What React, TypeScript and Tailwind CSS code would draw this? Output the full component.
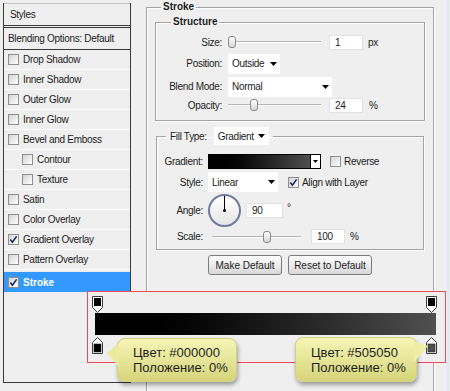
import React from 'react';

const styleItems = [
  { name: 'Drop Shadow', checked: false, indent: false },
  { name: 'Inner Shadow', checked: false, indent: false },
  { name: 'Outer Glow', checked: false, indent: false },
  { name: 'Inner Glow', checked: false, indent: false },
  { name: 'Bevel and Emboss', checked: false, indent: false },
  { name: 'Contour', checked: false, indent: true },
  { name: 'Texture', checked: false, indent: true },
  { name: 'Satin', checked: false, indent: false },
  { name: 'Color Overlay', checked: false, indent: false },
  { name: 'Gradient Overlay', checked: true, indent: false },
  { name: 'Pattern Overlay', checked: false, indent: false },
];

const Check = ({ checked = false }: { checked?: boolean }) => (
  <span className="w-[11px] h-[11px] shrink-0 border border-[#8e8f8f] bg-gradient-to-br from-[#d4d4d4] to-white flex items-center justify-center">
    {checked && (
      <svg width="9" height="9" viewBox="0 0 9 9">
        <path d="M1.3 4.6 L3.4 7.2 L7.6 1.4" stroke="#1b2560" strokeWidth="1.6" fill="none" />
      </svg>
    )}
  </span>
);

const Arrow = () => (
  <svg width="7" height="4" viewBox="0 0 7 4" className="shrink-0">
    <path d="M0 0 H7 L3.5 4 Z" fill="#000" />
  </svg>
);

const Select = ({ value, w }: { value: string; w: string }) => (
  <div className={`${w} h-[20px] bg-white flex items-center justify-between pl-[4px] pr-[3px]`}>
    <span>{value}</span>
    <Arrow />
  </div>
);

const Field = ({ value, w }: { value: string; w: string }) => (
  <div className={`${w} h-[15px] bg-white border border-[#e2e2e2] flex items-center pl-[5px]`}>{value}</div>
);

const Slider = ({ w, pos }: { w: string; pos: number }) => (
  <div className={`${w} relative h-[12px] flex items-center`}>
    <div className="w-full h-[2px] border-t border-[#b4b4b4] border-b border-b-white" />
    <div
      className="absolute top-0 w-[8px] h-[12px] rounded-[3px] border border-[#8a8a8a] bg-gradient-to-b from-white to-[#d6d6d6]"
      style={{ left: pos }}
    />
  </div>
);

const StopDown = () => (
  <svg width="11" height="17" viewBox="0 0 11 17">
    <path d="M0.5 0.5 H10.5 V11.5 L5.5 16.5 L0.5 11.5 Z" fill="#fff" stroke="#3a3a3a" />
    <rect x="2" y="2" width="7" height="8" fill="#000" />
  </svg>
);

const StopUp = ({ color }: { color: string }) => (
  <svg width="11" height="17" viewBox="0 0 11 17">
    <path d="M5.5 0.5 L10.5 5.5 V16.5 H0.5 V5.5 Z" fill="#fff" stroke="#3a3a3a" />
    <rect x="2" y="7" width="7" height="8" fill={color} stroke="#222" strokeWidth="0.6" />
  </svg>
);

const Tip = ({ color, left }: { color: string; left: boolean }) => (
  <div className="relative w-full h-full rounded-[8px] border border-[#d2d083] bg-gradient-to-b from-[#f6f5b6] to-[#d6d57a] shadow-[1px_3px_4px_rgba(0,0,0,0.35)] flex flex-col justify-center pl-[15px] text-[13px] leading-[15px] text-[#1e1e1e]">
    {left ? (
      <svg width="14" height="30" viewBox="0 0 14 30" className="absolute left-[-13px] top-[3px]">
        <polygon points="14,1 2,11 14,25" fill="#ecea9b" />
      </svg>
    ) : (
      <svg width="16" height="30" viewBox="0 0 16 30" className="absolute right-[-14px] top-[2px]">
        <polygon points="0,1 14,6 0,22" fill="#efeea6" />
      </svg>
    )}
    <span>Цвет: {color}</span>
    <span>Положение: 0%</span>
  </div>
);

export default function App() {
  return (
    <div className="relative w-[450px] h-[391px] overflow-hidden bg-[#efefef] flex items-start font-['Liberation_Sans',Arial,sans-serif] text-[10px] text-[#1c1c1c]">
      {/* styles list */}
      <div className="mt-[3px] ml-[3px] w-[128px] h-[380px] shrink-0 border-x border-b border-[#3a3a3a] flex flex-col tracking-[-0.3px]">
        <div className="h-[22px] border-t border-[#c4c4c4] pl-[6px] flex items-center">Styles</div>
        <div className="h-[3px] border-y border-[#3a3a3a]" />
        <div className="h-[22px] pl-[4px] flex items-center border-b border-[#3a3a3a]">Blending Options: Default</div>
        {styleItems.map((it) => (
          <div
            key={it.name}
            className={`h-[20px] flex items-center gap-[4px] border-b border-[#fafafa] ${it.indent ? 'pl-[18px]' : 'pl-[4px]'}`}
          >
            <Check checked={it.checked} />
            <span>{it.name}</span>
          </div>
        ))}
        <div className="h-[20px] mt-[2px] flex items-center gap-[4px] pl-[4px] bg-[#3399ff] text-white font-bold tracking-normal">
          <Check checked />
          <span>Stroke</span>
        </div>
      </div>

      {/* stroke settings */}
      <fieldset className="ml-[15px] mt-[1px] w-[288px] h-[400px] shrink-0 border border-[#a3a3a3] shadow-[inset_1px_1px_0_#fff,1px_1px_0_#fff]">
        <legend className="ml-[14px] px-[2px] font-bold leading-[12px]">Stroke</legend>
        <div className="px-[8px] tracking-[-0.3px]">
          <fieldset className="mt-[3px] w-[270px] border border-[#a3a3a3] shadow-[inset_1px_1px_0_#fff,1px_1px_0_#fff]">
            <legend className="ml-[15px] px-[2px] font-bold leading-[12px] tracking-normal">Structure</legend>
            <div className="pt-[5px] pb-[7px] flex flex-col">
              <div className="h-[18px] flex items-center">
                <span className="w-[66px] text-right">Size:</span>
                <div className="ml-[6px]"><Slider w="w-[93px]" pos={0} /></div>
                <div className="ml-[8px]"><Field value="1" w="w-[34px]" /></div>
                <span className="ml-[5px]">px</span>
              </div>
              <div className="h-[21px] mt-[2px] flex items-center">
                <span className="w-[66px] text-right">Position:</span>
                <div className="ml-[6px]"><Select value="Outside" w="w-[52px]" /></div>
              </div>
              <div className="h-[21px] mt-[2px] flex items-center">
                <span className="w-[66px] text-right">Blend Mode:</span>
                <div className="ml-[6px]"><Select value="Normal" w="w-[104px]" /></div>
              </div>
              <div className="h-[16px] flex items-center">
                <span className="w-[66px] text-right">Opacity:</span>
                <div className="ml-[6px]"><Slider w="w-[93px]" pos={22} /></div>
                <div className="ml-[8px]"><Field value="24" w="w-[34px]" /></div>
                <span className="ml-[6px]">%</span>
              </div>
            </div>
          </fieldset>

          <fieldset className="mt-[6px] ml-[1px] w-[268px] border border-[#a3a3a3] shadow-[inset_1px_1px_0_#fff,1px_1px_0_#fff]">
            <legend className="ml-[9px] px-[4px] flex items-center gap-[7px]">
              <span>Fill Type:</span>
              <div className="w-[55px] h-[18px] bg-white flex items-center justify-between pl-[4px] pr-[4px]">
                <span>Gradient</span>
                <Arrow />
              </div>
            </legend>
            <div className="pt-[9px] pb-[5px] flex flex-col">
              <div className="h-[15px] flex items-center">
                <span className="w-[46px] text-right">Gradient:</span>
                <div className="ml-[5px] w-[113px] h-[15px] border border-black flex">
                  <div className="flex-1 bg-gradient-to-r from-black to-[#505050]" />
                  <div className="w-[10px] border-l border-black bg-white flex items-center justify-center">
                    <svg width="5" height="3" viewBox="0 0 5 3"><path d="M0 0 H5 L2.5 3 Z" fill="#000" /></svg>
                  </div>
                </div>
                <div className="ml-[9px]"><Check /></div>
                <span className="ml-[3px]">Reverse</span>
              </div>
              <div className="h-[20px] mt-[3px] flex items-center">
                <span className="w-[46px] text-right">Style:</span>
                <div className="ml-[5px]"><Select value="Linear" w="w-[70px]" /></div>
                <div className="ml-[10px]"><Check checked /></div>
                <span className="ml-[3px]">Align with Layer</span>
              </div>
              <div className="h-[33px] mt-[2px] flex items-center">
                <span className="w-[46px] text-right">Angle:</span>
                <div className="ml-[5px] w-[33px] h-[33px] rounded-full border-2 border-[#6f7aa0] bg-gradient-to-b from-white to-[#e6e6e6] flex flex-col items-center">
                  <div className="w-[1.5px] h-[14px] bg-black" />
                  <div className="w-[3px] h-[3px] -mt-[1px] bg-black rounded-full" />
                </div>
                <div className="ml-[5px]"><Field value="90" w="w-[37px]" /></div>
                <span className="ml-[4px] self-start mt-[6px]">°</span>
              </div>
              <div className="h-[15px] mt-[2px] flex items-center">
                <span className="w-[46px] text-right">Scale:</span>
                <div className="ml-[9px]"><Slider w="w-[89px]" pos={51} /></div>
                <div className="ml-[10px]"><Field value="100" w="w-[34px]" /></div>
                <span className="ml-[5px]">%</span>
              </div>
            </div>
          </fieldset>

          <div className="mt-[5px] flex justify-center gap-[6px] tracking-normal">
            <button className="w-[74px] h-[20px] rounded-[3px] border border-[#7b7b7b] bg-gradient-to-b from-white to-[#d8d8d8]">Make Default</button>
            <button className="w-[84px] h-[20px] rounded-[3px] border border-[#7b7b7b] bg-gradient-to-b from-white to-[#d8d8d8]">Reset to Default</button>
          </div>
        </div>
      </fieldset>

      <div className="ml-auto mr-[1px] self-stretch w-[2px] bg-[#dfe9f5]" />

      {/* gradient editor callout */}
      <div className="absolute left-[87px] top-[291px] w-[359px] h-[72px] border border-[#e94b5c] bg-[#efefef] flex flex-col pt-[4px]">
        <div className="pl-[4px] w-[349px] flex justify-between">
          <StopDown />
          <StopDown />
        </div>
        <div className="ml-[7px] w-[341px] h-[22px] bg-gradient-to-r from-black to-[#505050]" />
        <div className="mt-[2px] pl-[4px] w-[349px] flex justify-between">
          <StopUp color="#000" />
          <StopUp color="#505050" />
        </div>
      </div>

      <div className="absolute left-[117px] top-[338px] w-[120px] h-[44px]">
        <Tip color="#000000" left />
      </div>
      <div className="absolute left-[295px] top-[337px] w-[122px] h-[45px]">
        <Tip color="#505050" left={false} />
      </div>
    </div>
  );
}
